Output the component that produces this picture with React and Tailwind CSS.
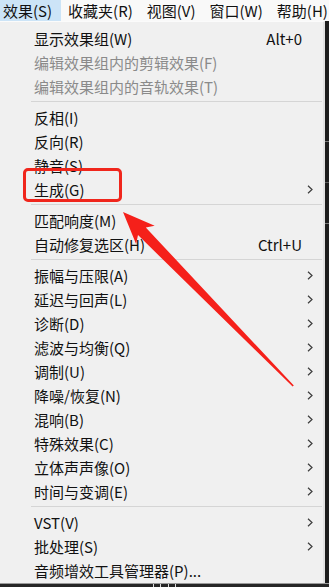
import React from "react"

const font = { fontFamily: '"Noto Sans CJK SC", "Noto Sans", sans-serif' }

// menu rows, "sep" marks a separator line
const rows = [
  { label: "显示效果组(W)", key: "Alt+0" },
  { label: "编辑效果组内的剪辑效果(F)", off: true },
  { label: "编辑效果组内的音轨效果(T)", off: true },
  "sep",
  { label: "反相(I)" },
  { label: "反向(R)" },
  { label: "静音(S)" },
  { label: "生成(G)", sub: true },
  "sep",
  { label: "匹配响度(M)" },
  { label: "自动修复选区(H)", key: "Ctrl+U" },
  "sep",
  { label: "振幅与压限(A)", sub: true },
  { label: "延迟与回声(L)", sub: true },
  { label: "诊断(D)", sub: true },
  { label: "滤波与均衡(Q)", sub: true },
  { label: "调制(U)", sub: true },
  { label: "降噪/恢复(N)", sub: true },
  { label: "混响(B)", sub: true },
  { label: "特殊效果(C)", sub: true },
  { label: "立体声声像(O)", sub: true },
  { label: "时间与变调(E)", sub: true },
  "sep",
  { label: "VST(V)", sub: true },
  { label: "批处理(S)", sub: true },
  { label: "音频增效工具管理器(P)..." },
]

const menuBar = ["效果(S)", "收藏夹(R)", "视图(V)", "窗口(W)", "帮助(H)"]

function Chevron() {
  return (
    <svg width="7" height="9" viewBox="0 0 7 9">
      <path d="M1 0.8 L5 4.5 L1 8.2" fill="none" stroke="#3c3c3c" strokeWidth="1.2" />
    </svg>
  )
}

function Row({ item }) {
  if (item === "sep") {
    return (
      <div className="h-[7px] flex items-center pl-[31px] pr-[1px]">
        <div className="h-px w-full bg-[#d5d5d5]"></div>
      </div>
    )
  }
  return (
    <div className="h-[24px] flex items-center pl-[34px] pr-[9px]">
      <span className={"flex-1 whitespace-nowrap " + (item.off ? "text-[#8a8a8a]" : "text-[#111111]")}>{item.label}</span>
      {item.key && <span className="text-[#111111] whitespace-nowrap">{item.key}</span>}
      <span className="w-[12px] flex justify-end">{item.sub && <Chevron />}</span>
    </div>
  )
}

export default function App() {
  return (
    <div className="relative w-[329px] h-[587px] overflow-hidden bg-[#1d1d1d] text-[15px] leading-none" style={font}>

      {/* menu bar */}
      <div className="h-[21px] bg-[#f9f9f9] flex items-center ml-[-4px] whitespace-nowrap">
        {menuBar.map((m, i) => (
          <div key={m} className={"h-full flex items-center px-[7px] " + (i === 0 ? "bg-[#cce4f7] pr-[9px]" : "")}>
            <span className="text-[#111111]">{m}</span>
          </div>
        ))}
      </div>

      {/* dropdown + dark editor strip */}
      <div className="flex">
        <div className="w-[325px] bg-[#f0f0f0] border-t border-[#fbfbfb] border-r-2 border-r-[#e2e2e2] pt-[4px] pb-[1px]">
          {rows.map((r, i) => <Row key={i} item={r} />)}
        </div>
        <div className="flex-1 bg-[#1d1d1d] flex flex-col gap-[40px] pt-[120px]">
          <div className="h-px bg-[#777777]"></div>
          <div className="h-px bg-[#5a5a5a]"></div>
          <div className="h-px bg-[#777777]"></div>
        </div>
      </div>

      {/* bottom timeline strip */}
      <div className="h-[4px] bg-[#262626] border-t border-[#9a9a9a] flex justify-around px-[150px]">
        <div className="w-px bg-[#dddddd]"></div>
        <div className="w-px bg-[#dddddd]"></div>
        <div className="w-px bg-[#dddddd]"></div>
        <div className="w-px bg-[#dddddd]"></div>
      </div>

      {/* red highlight box */}
      <div className="absolute left-[23px] top-[168px] w-[99px] h-[34px] border-[3px] border-[#f0261c] rounded-[5px]"></div>

      {/* red arrow */}
      <svg className="absolute left-0 top-0" width="329" height="587" viewBox="0 0 329 587">
        <polygon
          points="123,212 154.7,225.8 145.8,227.5 293.8,385.6 292.6,386.6 138,235.1 136.1,244"
          fill="#f5201a"
        />
      </svg>
    </div>
  )
}
